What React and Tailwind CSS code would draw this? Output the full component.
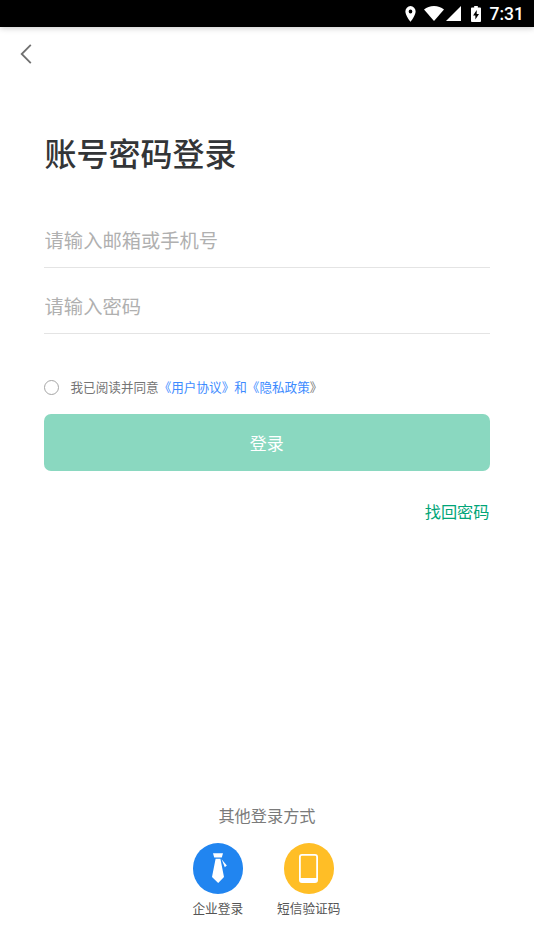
import React from "react";

const StatusBar = () => (
  <div className="h-[27px] shrink-0 bg-black flex items-center justify-end pr-[10px] text-white shadow-[0_1px_6px_rgba(0,0,0,0.22)]">
    <svg className="w-[11px] h-[16px] mr-[8px]" viewBox="0 0 12 16" fill="currentColor" preserveAspectRatio="none">
      <path fillRule="evenodd" d="M6 0a5.6 5.6 0 0 0-5.6 5.6C.4 9.6 6 16 6 16s5.6-6.4 5.6-10.4A5.6 5.6 0 0 0 6 0Zm0 3.5a2 2 0 1 1 0 4 2 2 0 0 1 0-4Z" />
    </svg>
    <svg className="w-[20px] h-[15px] mr-[2px]" viewBox="0 0 20 16" fill="currentColor" preserveAspectRatio="none">
      <path d="M10 0C6.2 0 2.7 1.4 0 3.6L10 16 20 3.6C17.3 1.4 13.8 0 10 0Z" />
    </svg>
    <svg className="w-[15px] h-[15px] mr-[10px]" viewBox="0 0 16 16" fill="currentColor">
      <path d="M0 16h16V0Z" />
    </svg>
    <svg className="w-[10px] h-[16px] mr-[9px]" viewBox="0 0 11 17" fill="currentColor" preserveAspectRatio="none">
      <path fillRule="evenodd" d="M3.5 0h4v1.700H10q1 0 1 1V16q0 1-1 1H1q-1 0-1-1V2.700q0-1 1-1h2.500ZM6.300 4.300 2.300 10.200h2.500v4.200l4-6H6.300Z" />
    </svg>
    <span className="font-['Roboto',sans-serif] font-medium text-[17.5px] leading-[27px] pt-px">7:31</span>
  </div>
);

const Field = ({ type, placeholder }) => (
  <input
    type={type}
    placeholder={placeholder}
    className="block w-full h-[66px] pt-[10px] pl-[0.6px] border-b border-[#e4e4e4] bg-transparent text-[19.3px] text-[#333] placeholder:text-[#b0b0b0] outline-none"
  />
);

const LoginMethod = ({ label, color, children }) => (
  <div className="flex flex-col items-center w-[91px]">
    <button className={`w-[50.5px] h-[50.5px] rounded-full flex items-center justify-center ${color}`}>
      {children}
    </button>
    <span className="mt-[4px] text-[12.7px] leading-5 text-[#555] whitespace-nowrap">{label}</span>
  </div>
);

const App = () => {
  return (
    <div className="w-full h-[950px] bg-white flex flex-col overflow-hidden font-['Noto_Sans_CJK_SC',sans-serif]">
      <StatusBar />

      {/* Back */}
      <header className="h-[53px] shrink-0 flex items-center pl-5">
        <svg className="w-[12px] h-[20px]" viewBox="0 0 12 20" fill="none" stroke="#707070" strokeWidth="1.8">
          <path d="M10.8 0.8 1.7 10l9.1 9.2" />
        </svg>
      </header>

      <main className="pl-[44px] pr-[44.5px] flex flex-col">
        <h1 className="mt-[48px] h-12 pl-[0.5px] text-[32px] leading-12 font-medium text-[#333537]">账号密码登录</h1>

        <div className="mt-[26px]">
          <Field type="text" placeholder="请输入邮箱或手机号" />
          <Field type="password" placeholder="请输入密码" />
        </div>

        {/* Agreement */}
        <div className="mt-[43px] h-5 flex items-center text-[12.6px] leading-5 text-[#757575]">
          <span className="w-[15px] h-[15px] mr-[11.5px] rounded-full border border-[#a5a5a5]" />
          <span>
            我已阅读并同意<span className="text-[#3d8bff]">《用户协议》和《隐私政策</span>》
          </span>
        </div>

        <button className="mt-[17px] h-[57px] rounded-[7px] bg-[#8ad8c0] text-white text-[17px]">登录</button>
        <a className="mt-[28px] self-end text-[16.2px] leading-6 text-[#00a578]">找回密码</a>
      </main>

      {/* Other ways to sign in */}
      <footer className="mt-auto pb-[32.5px] flex flex-col items-center">
        <p className="text-[16.2px] leading-6 text-[#7a7a7a]">其他登录方式</p>
        <div className="mt-[16px] pr-[7.5px] flex">
          <LoginMethod label="企业登录" color="bg-[#2185f0]">
            <svg className="w-[18px] h-[32px]" viewBox="0 0 18 32" fill="#fff">
              <path d="M4 1.2h10l-1.2 4.3H5.2ZM6.600 6.700h4.800L15 25 9.200 31 3 25Z" />
              <path d="m12.6 7.2 5.2 6.3-2 1.7Z" />
            </svg>
          </LoginMethod>
          <LoginMethod label="短信验证码" color="bg-[#ffbe26]">
            <svg className="w-[19px] h-[29px]" viewBox="0 0 19 29" fill="#fff">
              <path fillRule="evenodd" d="M3 0h13q3 0 3 3v23q0 3-3 3H3q-3 0-3-3V3q0-3 3-3Zm0 1.8q-1.2 0-1.2 1.2v21h15.4V3q0-1.2-1.2-1.2Z" />
            </svg>
          </LoginMethod>
        </div>
      </footer>
    </div>
  );
};

export default App;
